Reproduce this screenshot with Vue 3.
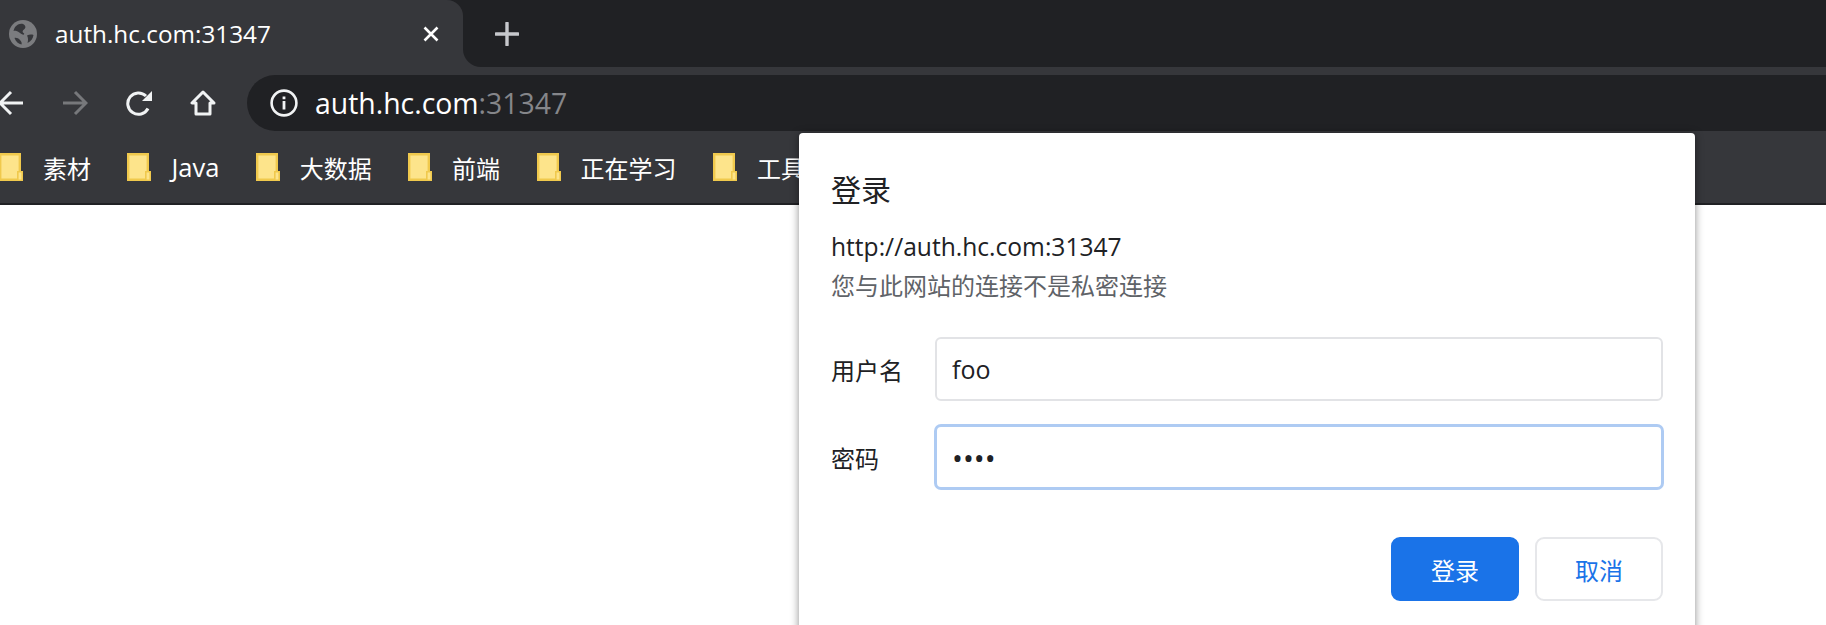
<template>
  <div class="window">
    <div class="tabstrip">
      <div class="tab">
        <svg class="globe" viewBox="0 0 28 28">
          <circle cx="14" cy="14" r="14" fill="#7b7c7f" />
          <path d="M9 4.500c2.500-1 5-1 6.500.5 1.500 1.500 1 3.500-.5 4.500-1.500 1-2 2.500-.5 3.500 1.500 1 .5 2-1 1.500-2-.8-3.500-3-6-3.500-1-.2-2-.3-3 0 .5-3 2.200-5.200 4.500-6.500zM18 15.500c2-1 4.500-1.200 6.500-.5-.5 3.500-2.500 6.500-6 8 .8-2.500.8-5.200-.5-7.500zM5.500 18c2-.5 4 .5 5.500 2 1.500 1.500 2 3 1.500 4.500-3-.5-5.700-3-7-6.500z" fill="#36373b" />
        </svg>
        <span class="tab-title">auth.hc.com:31347</span>
        <svg class="tab-close" viewBox="0 0 16 16">
          <path d="M1.500 1.500l13 13M14.500 1.500l-13 13" stroke="#fff" stroke-width="2.600" fill="none" />
        </svg>
      </div>
      <div class="strip-rest">
        <svg class="new-tab" viewBox="0 0 24 24">
          <path d="M12 1v22M1 12h22" stroke="#c6c8cc" stroke-width="3.400" stroke-linecap="round" fill="none" />
        </svg>
      </div>
    </div>

    <div class="toolbar">
      <svg class="nav back" viewBox="0 0 26 26">
        <path d="M25 13H3M13 2L2 13l11 11" stroke="#f1f3f4" stroke-width="3" fill="none" />
      </svg>
      <svg class="nav forward" viewBox="0 0 26 26">
        <path d="M1 13h22M13 2l11 11-11 11" stroke="#77787b" stroke-width="3" fill="none" />
      </svg>
      <svg class="nav reload" viewBox="0 0 26 26">
        <path d="M22 18.500A10.700 10.700 0 1 1 20 6" stroke="#f1f3f4" stroke-width="3" fill="none" />
        <path d="M26 1v10H16z" fill="#f1f3f4" />
      </svg>
      <svg class="nav home" viewBox="0 0 26 26">
        <path d="M13 2L2 13h4v11h14V13h4z" stroke="#f1f3f4" stroke-width="3" stroke-linejoin="round" fill="none" />
      </svg>
      <div class="omnibox">
        <svg class="info" viewBox="0 0 28 28">
          <circle cx="14" cy="14" r="12.400" stroke="#f1f3f4" stroke-width="2.600" fill="none" />
          <path d="M12.600 12h2.800v8.600h-2.800zM12.600 7.400h2.800v2.800h-2.800z" fill="#f1f3f4" />
        </svg>
        <span class="url">auth.hc.com<span class="port">:31347</span></span>
      </div>
    </div>

    <div class="bookmarks">
      <div v-for="name in bookmarks" :key="name" class="bookmark">
        <svg class="folder" viewBox="0 0 24 28">
          <path d="M1.200 1.200h19.600v25.600H1.200z" fill="#fde48b" stroke="#f0c94d" stroke-width="2.400" />
          <path d="M18.800 18.800h4.400v8.400h-4.400z" fill="#fde48b" stroke="#f0c94d" stroke-width="1.600" />
        </svg>
        <span :class="{ latin: name === 'Java' }">{{ name }}</span>
      </div>
    </div>

    <div class="dialog">
      <h1 class="title">登录</h1>
      <div class="origin">http://auth.hc.com:31347</div>
      <div class="note">您与此网站的连接不是私密连接</div>
      <form class="fields" @submit.prevent>
        <label for="user">用户名</label>
        <input id="user" class="field" type="text" value="foo" readonly />
        <label for="pass">密码</label>
        <input id="pass" class="field focused" type="password" value="1234" readonly />
      </form>
      <div class="actions">
        <button class="btn primary" type="button">登录</button>
        <button class="btn" type="button">取消</button>
      </div>
    </div>
  </div>
</template>

<script setup>
const bookmarks = ['素材', 'Java', '大数据', '前端', '正在学习', '工具']
</script>

<style>
html,
body {
  overflow: hidden;
  background: #fff;
}
</style>

<style scoped>
.window {
  position: relative;
  height: 625px;
  overflow: hidden;
  font-family: "Open Sans", "Noto Sans CJK SC", sans-serif;
}

.tabstrip {
  display: flex;
  height: 67px;
  background: linear-gradient(#202124 50%, #36373b 50%);
}

.tab {
  display: flex;
  align-items: center;
  width: 463px;
  padding-left: 9px;
  box-sizing: border-box;
  background: #36373b;
  border-top-right-radius: 16px;
}

.globe {
  width: 28px;
  height: 28px;
}

.tab-title {
  flex: 1;
  margin-left: 18px;
  color: #fff;
  font-size: 24.3px;
}

.tab-close {
  width: 16px;
  height: 16px;
  margin-right: 24px;
}

.strip-rest {
  flex: 1;
  display: flex;
  align-items: center;
  padding-left: 32px;
  background: #202124;
  border-bottom-left-radius: 18px;
}

.new-tab {
  width: 24px;
  height: 24px;
}

.toolbar {
  display: flex;
  align-items: center;
  height: 56px;
  padding-top: 8px;
  background: #36373b;
}

.nav {
  flex: none;
  width: 26px;
  height: 26px;
}

.back {
  margin-left: -2px;
}

.forward,
.reload,
.home {
  margin-left: 38px;
}

.omnibox {
  flex: 1;
  display: flex;
  align-items: center;
  height: 56px;
  margin-left: 31px;
  padding-left: 23px;
  background: #202124;
  border-radius: 28px 0 0 28px;
}

.info {
  width: 28px;
  height: 28px;
}

.url {
  margin-left: 17px;
  color: #fff;
  font-size: 28.4px;
}

.port {
  color: #85868a;
}

.bookmarks {
  display: flex;
  align-items: center;
  gap: 36.4px;
  height: 72px;
  margin-left: -1px;
  background: #36373b;
  border-bottom: 2px solid #202124;
  color: #fff;
  font-size: 24px;
}

.bookmark {
  display: flex;
  align-items: center;
  gap: 20px;
}

.latin {
  font-size: 25.5px;
}

.folder {
  width: 24px;
  height: 28px;
}

.dialog {
  position: absolute;
  top: 133px;
  left: 799px;
  width: 896px;
  height: 560px;
  padding: 0 32px;
  box-sizing: border-box;
  background: #fff;
  border-radius: 4px;
  box-shadow: 0 1px 8px rgba(0, 0, 0, 0.45);
  color: #202124;
}

.title {
  margin: 39px 0 0;
  font-size: 30px;
  font-weight: 400;
  line-height: 36px;
}

.origin {
  margin-top: 23px;
  font-size: 24.6px;
  line-height: 32px;
}

.note {
  margin-top: 7px;
  color: #5f6368;
  font-size: 24px;
  line-height: 32px;
}

.fields {
  display: grid;
  grid-template-columns: 104px 1fr;
  align-items: center;
  row-gap: 24px;
  margin-top: 35px;
  font-size: 24px;
}

.field {
  box-sizing: border-box;
  width: 100%;
  height: 64px;
  padding: 0 15px;
  border: 2px solid #e2e3e6;
  border-radius: 6px;
  outline: none;
  color: #202124;
  font-family: inherit;
  font-size: 25px;
}

.focused {
  border-color: #aecbf3;
  box-shadow: 0 0 0 1px #aecbf3;
  font-size: 29px;
}

.actions {
  display: flex;
  justify-content: flex-end;
  gap: 16px;
  margin-top: 48px;
}

.btn {
  width: 128px;
  height: 64px;
  border: 2px solid #e6e7ea;
  border-radius: 9px;
  background: #fff;
  color: #1a73e8;
  font-family: inherit;
  font-size: 24px;
}

.primary {
  border-color: #1a73e8;
  background: #1a73e8;
  color: #fff;
}
</style>
